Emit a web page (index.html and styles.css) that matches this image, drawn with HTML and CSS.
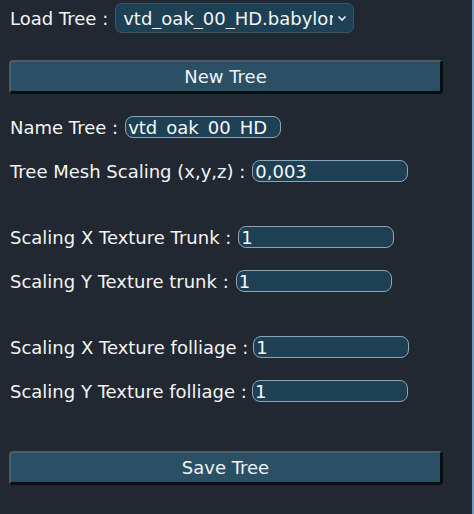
FILE: index.html
```html
<!DOCTYPE html>
<html>
<head>
<meta charset="utf-8">
<link rel="stylesheet" href="styles.css">
</head>
<body>
<div class="panel">
  <div class="row row-load">
    <span class="label">Load Tree :</span>
    <div class="select-wrap">
      <select class="select">
        <option>vtd_oak_00_HD.babylon</option>
      </select>
      <svg class="chev" width="10" height="7" viewBox="0 0 10 7"><path d="M1.5 1.5 L5 5 L8.5 1.5" fill="none" stroke="#e8eef2" stroke-width="1.6"/></svg>
    </div>
  </div>
  <button class="btn btn-new">New Tree</button>
  <div class="row row-name">
    <span class="label">Name Tree :</span>
    <input class="field" value="vtd_oak_00_HD">
  </div>
  <div class="row row-mesh">
    <span class="label">Tree Mesh Scaling (x,y,z) :</span>
    <input class="field" value="0,003">
  </div>
  <div class="row row-gap">
    <span class="label">Scaling X Texture Trunk :</span>
    <input class="field" value="1">
  </div>
  <div class="row row-near">
    <span class="label">Scaling Y Texture trunk :</span>
    <input class="field" value="1">
  </div>
  <div class="row row-gap row-tight">
    <span class="label">Scaling X Texture folliage :</span>
    <input class="field" value="1">
  </div>
  <div class="row row-near row-tight">
    <span class="label">Scaling Y Texture folliage :</span>
    <input class="field" value="1">
  </div>
  <button class="btn btn-save">Save Tree</button>
</div>
</body>
</html>
```
FILE: styles.css
```css
html, body {
  margin: 0;
  padding: 0;
  background: #222831;
}
body {
  font-family: "DejaVu Sans", Verdana, sans-serif;
  font-size: 18px;
  color: #f2f4f5;
}
.panel {
  box-sizing: border-box;
  width: 474px;
  height: 514px;
  padding-left: 10px;
  padding-top: 3px;
  border-right: 2px solid #6b9bc8;
  display: flex;
  flex-direction: column;
  align-items: flex-start;
}
.row {
  display: flex;
  align-items: center;
  gap: 7px;
  height: 22px;
}
.row-load { height: 30px; gap: 7px; }
.row-name { margin-top: 22px; }
.row-mesh { margin-top: 22px; }
.row-gap { margin-top: 44px; }
.row-near { margin-top: 22px; }
.row-tight { gap: 5px; }
.label {
  white-space: nowrap;
}
.select-wrap {
  position: relative;
  overflow: hidden;
  border-radius: 6px;
}
.select {
  -webkit-appearance: none;
  appearance: none;
  box-sizing: border-box;
  width: 239px;
  height: 30px;
  padding: 0 20px 0 7px;
  background: #1e4054;
  color: #f2f4f5;
  border: 1px solid #3b5565;
  border-radius: 6px;
  font: inherit;
  outline: none;
}
.chev {
  position: absolute;
  right: 7px;
  top: 12px;
  box-shadow: -4px 0 0 #1e4054;
  background: #1e4054;
}
.field {
  box-sizing: border-box;
  width: 156px;
  height: 22px;
  padding: 0 2px;
  background: #1e4054;
  color: #f6f8f9;
  border: 1px solid #8ea4b3;
  border-radius: 8px;
  font: inherit;
  outline: none;
}
.btn {
  box-sizing: border-box;
  width: 434px;
  height: 34px;
  margin-left: -1px;
  background: #2b5065;
  color: #eef3f5;
  font: inherit;
  border-style: solid;
  border-width: 2px 3px 3px 2px;
  border-color: #4d5d68 #090d11 #090d11 #4d5d68;
  border-radius: 4px;
  padding: 0;
}
.btn-new { margin-top: 27px; }
.btn-save { margin-top: 49px; }
```
